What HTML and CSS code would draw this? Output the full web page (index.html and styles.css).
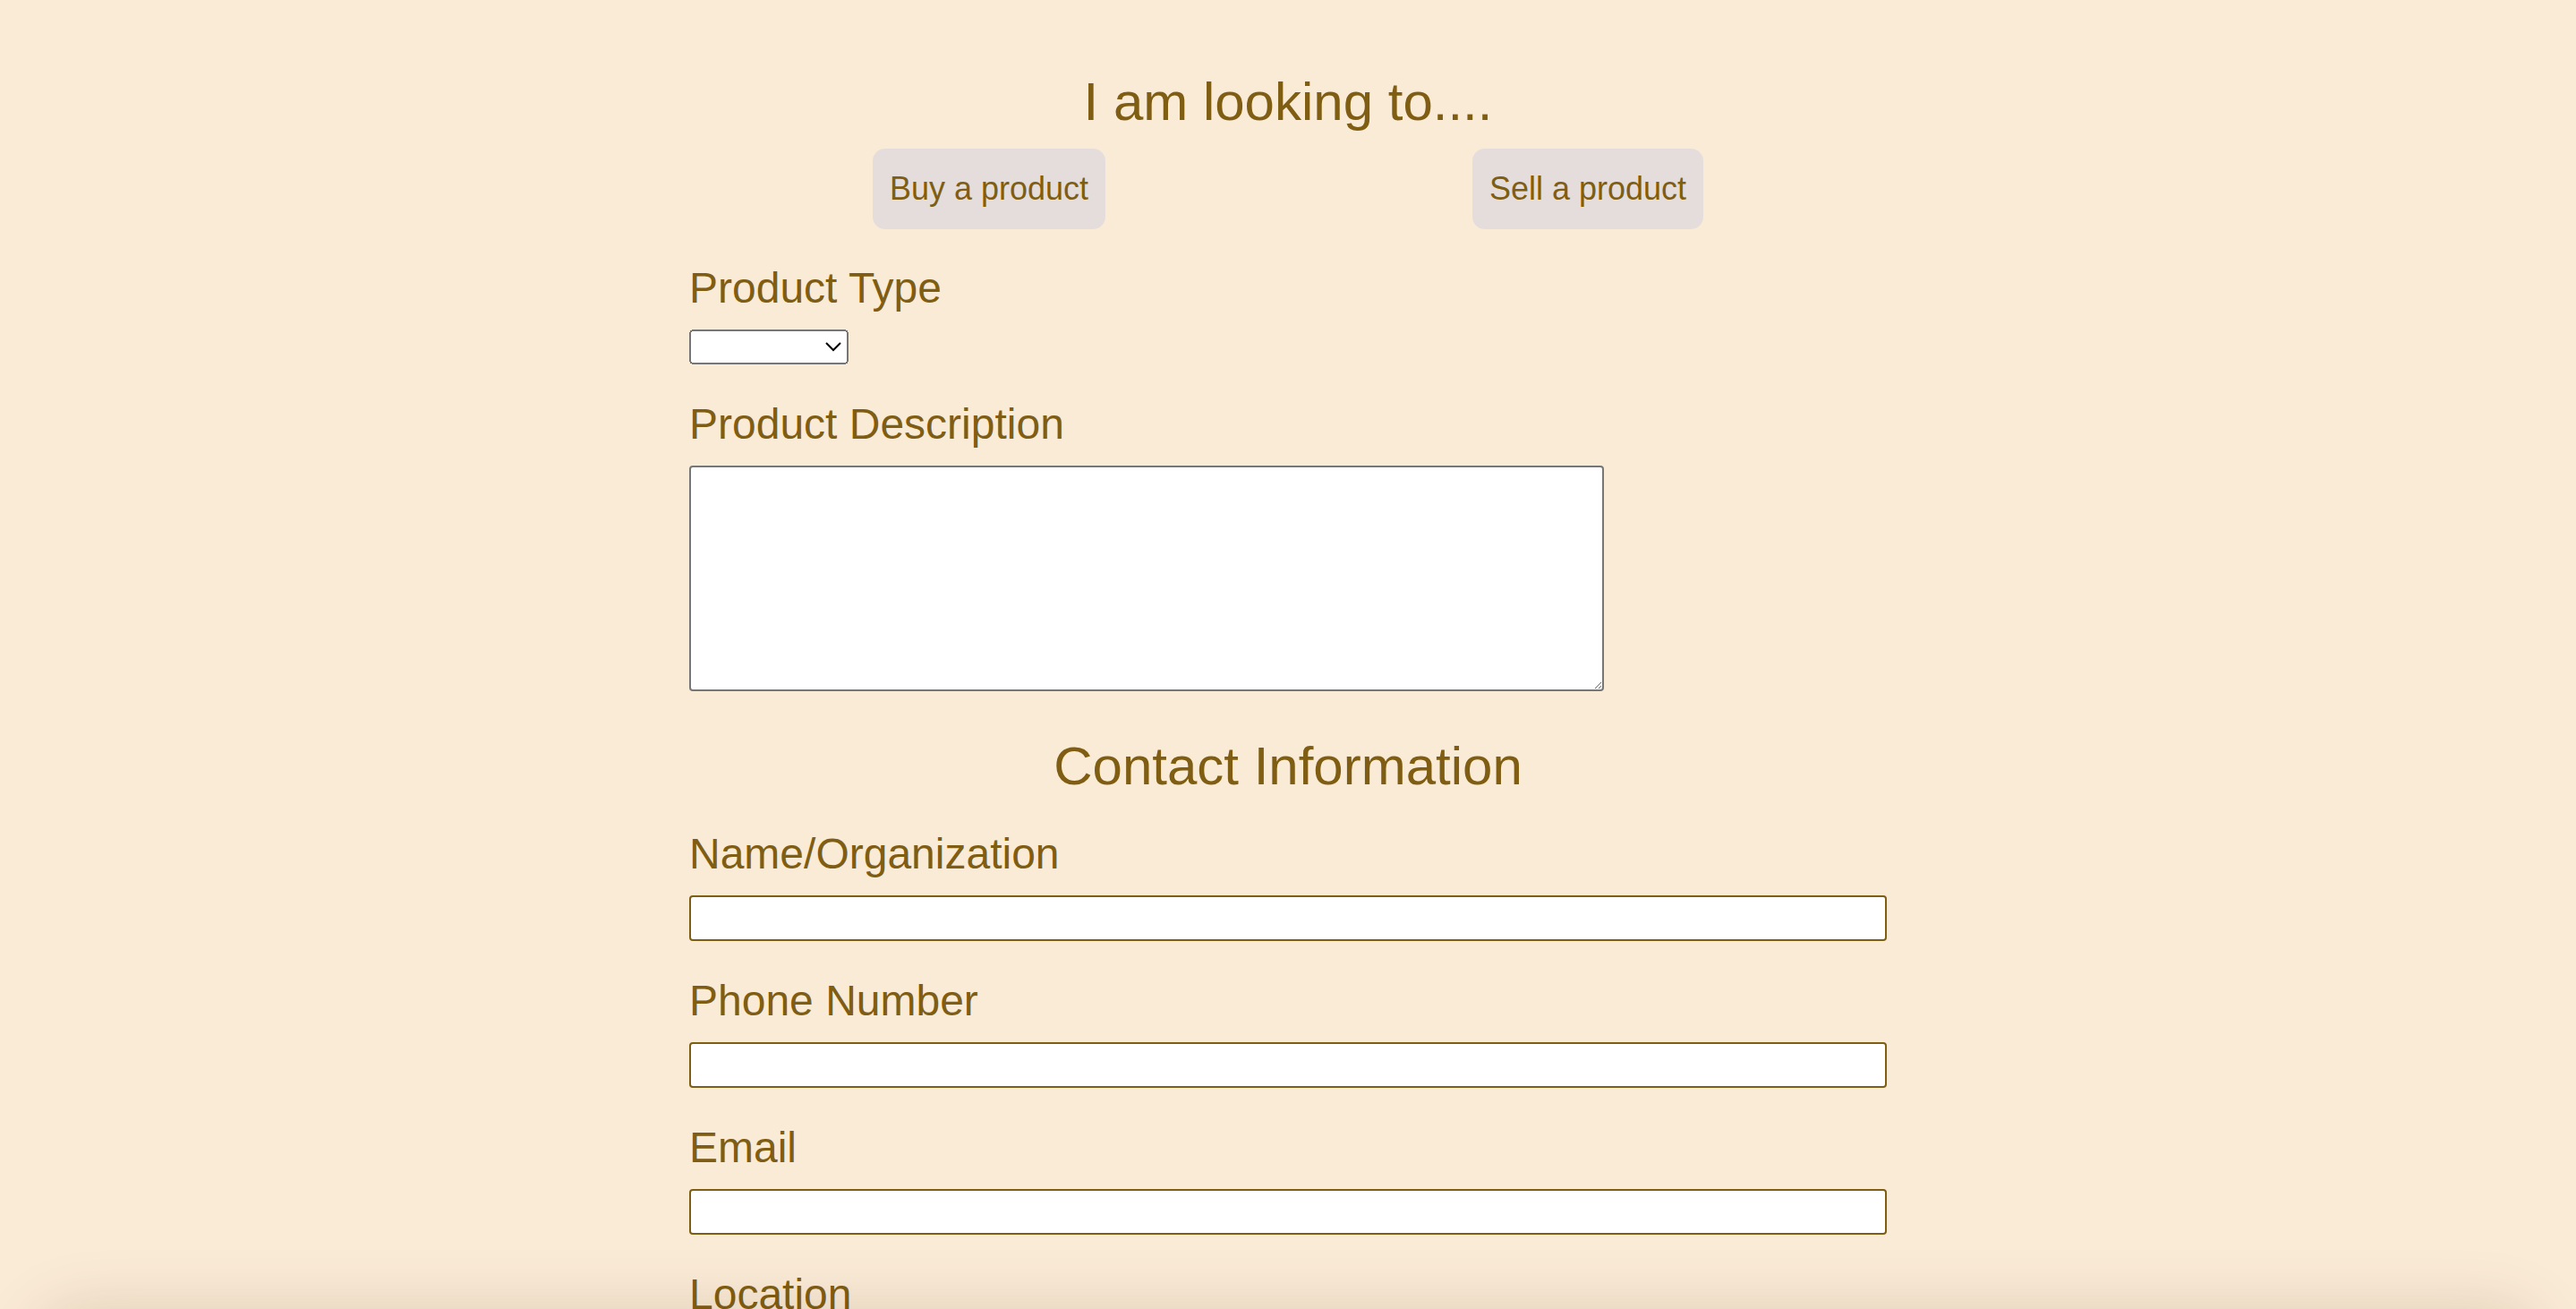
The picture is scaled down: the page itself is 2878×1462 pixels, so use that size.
FILE: index.html
```html
<!DOCTYPE html>
<html lang="en">
<head>
    <meta name="viewport" content="width=device-width, initial-scale=1">
    <title>Product Request</title>
    <link rel="stylesheet" href="styles.css">
</head>
<body>
    <form class="request-form">
        <h1 class="form-title">I am looking to....</h1>
        <div class="choice-row">
            <button type="button" class="choice-btn">Buy a product</button>
            <button type="button" class="choice-btn">Sell a product</button>
        </div>

        <div class="field">
            <label for="productType">Product Type</label>
            <select id="productType" class="type-select">
                <option></option>
            </select>
        </div>

        <div class="field">
            <label for="description">Product Description</label>
            <textarea id="description" class="desc-box"></textarea>
        </div>

        <h2 class="form-title contact-title">Contact Information</h2>

        <div class="field">
            <label for="name">Name/Organization</label>
            <input type="text" id="name" class="text-input">
        </div>
        <div class="field">
            <label for="phone">Phone Number</label>
            <input type="tel" id="phone" class="text-input">
        </div>
        <div class="field">
            <label for="email">Email</label>
            <input type="email" id="email" class="text-input">
        </div>
        <div class="field">
            <label for="location">Location</label>
            <input type="text" id="location" class="text-input">
        </div>
    </form>

    <div class="bottom-sheet"></div>
</body>
</html>
```

FILE: styles.css
```css
body {
    margin: 0;
    background: #faebd7;
    color: #7f5d12;
    font-family: "Liberation Sans", Arial, sans-serif;
    overflow: hidden;
}
.request-form {
    width: 1338px;
    margin: 0 auto;
    padding-top: 79px;
}
.form-title {
    margin: 0 0 18px;
    font-size: 60px;
    font-weight: normal;
    line-height: 69px;
    text-align: center;
}
.choice-row {
    display: flex;
    justify-content: space-around;
    margin-bottom: 38px;
}
.choice-btn {
    padding: 24px 19px;
    border: none;
    border-radius: 14px;
    background: #e5dddb;
    color: #7f5d12;
    font-family: inherit;
    font-size: 36px;
    line-height: 42px;
    cursor: pointer;
}
.field {
    margin-bottom: 39px;
}
.field label {
    display: block;
    margin-bottom: 19px;
    font-size: 48px;
    line-height: 55px;
}
.type-select {
    display: block;
    zoom: 2;
    width: 89px;
    height: 19.5px;
}
.desc-box {
    display: block;
    box-sizing: border-box;
    width: 1022px;
    height: 252px;
    border: 2px solid #767676;
    border-radius: 4px;
    background: white;
}
.contact-title {
    margin: 49px 0 36px;
}
.text-input {
    display: block;
    box-sizing: border-box;
    width: 100%;
    height: 51px;
    border: 2px solid #7f5d12;
    border-radius: 4px;
    background: white;
}
.bottom-sheet {
    position: fixed;
    left: 40px;
    right: 40px;
    top: 100%;
    height: 300px;
    border-radius: 48px;
    background: #faebd7;
    box-shadow: 0 0 70px rgba(90, 50, 0, 0.16);
}
```
